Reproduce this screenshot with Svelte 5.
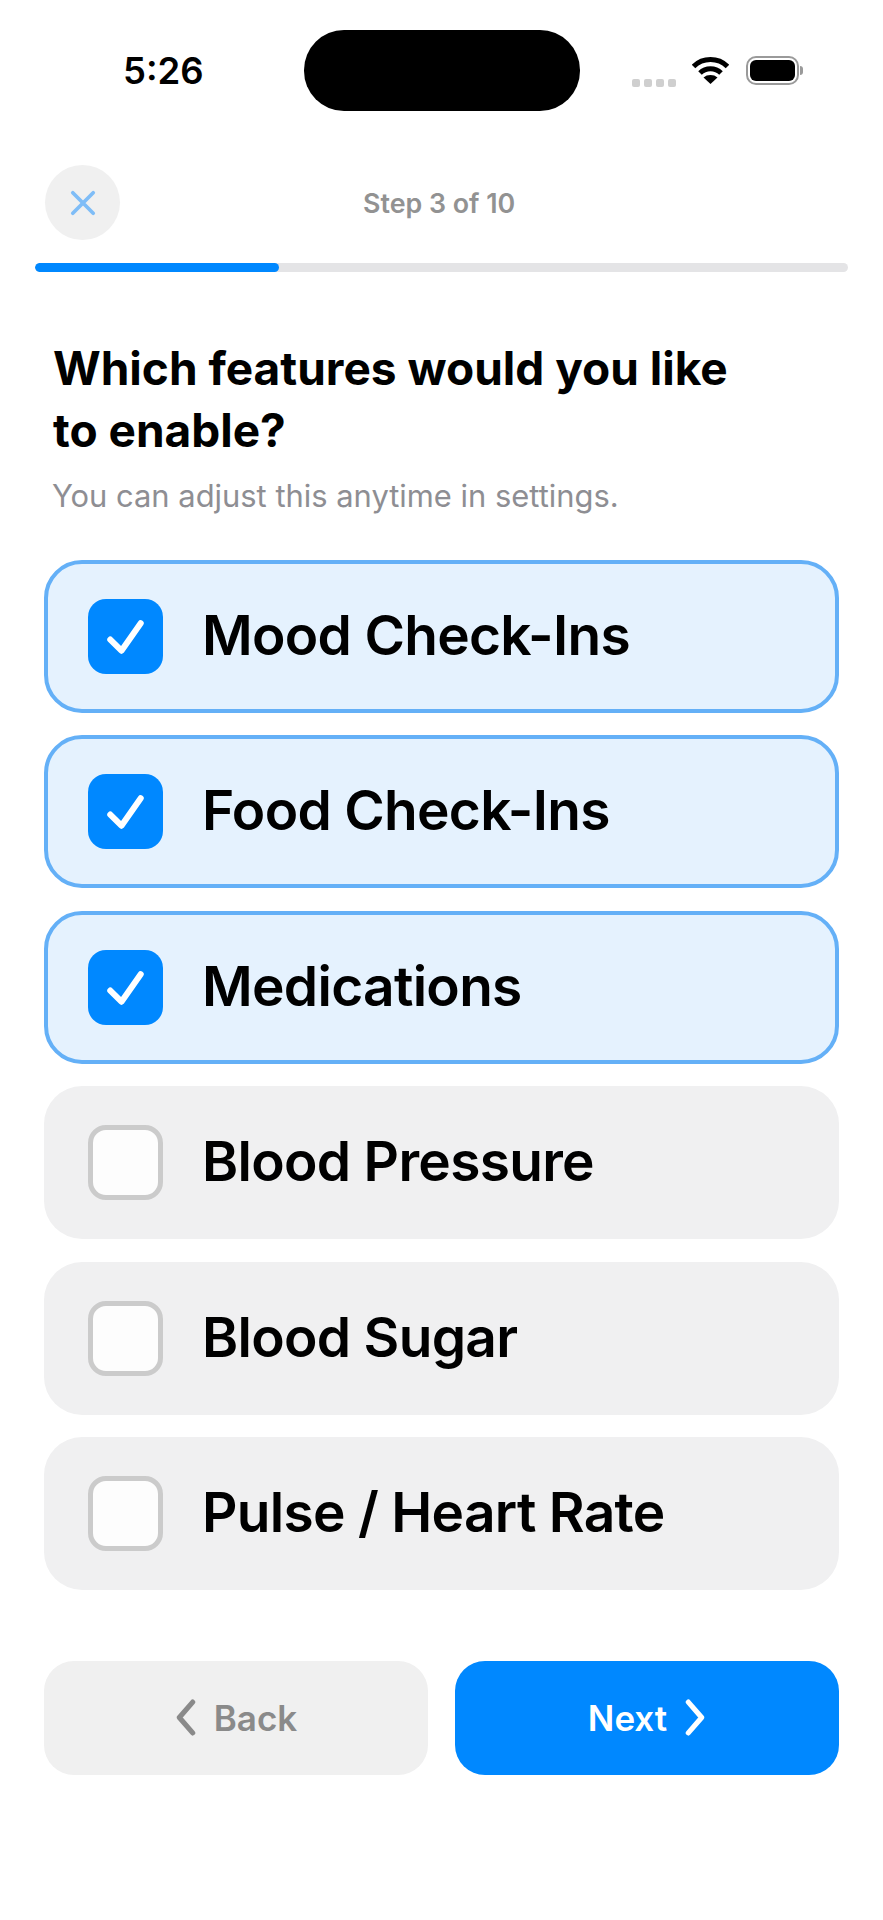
<script>
  const options = [
    { label: "Mood Check-Ins", on: true },
    { label: "Food Check-Ins", on: true },
    { label: "Medications", on: true },
    { label: "Blood Pressure", on: false },
    { label: "Blood Sugar", on: false },
    { label: "Pulse / Heart Rate", on: false }
  ];
</script>

<div class="screen">
  <div class="status">
    <span class="time">5:26</span>
    <div class="island"></div>
    <div class="status-right">
      <div class="dots"><i></i><i></i><i></i><i></i></div>
      <svg class="wifi" viewBox="0 0 37 27" aria-hidden="true">
        <path d="M1.5 9.5C6 5 12 2.5 18.5 2.5S31 5 35.500 9.500" fill="none" stroke="#000" stroke-width="5"/>
        <path d="M8 16c2.800-2.800 6.500-4.300 10.500-4.300S26.200 13.200 29 16" fill="none" stroke="#000" stroke-width="5"/>
        <path d="M11.500 20.500c2-1.700 4.400-2.500 7-2.500s5 .8 7 2.500l-7 6.500z"/>
      </svg>
      <div class="battery">
        <div class="cell"><div class="charge"></div></div>
        <div class="nub"></div>
      </div>
    </div>
  </div>

  <div class="top">
    <button class="close" type="button" aria-label="Close">
      <svg viewBox="0 0 28 28" aria-hidden="true"><path d="M3 3 25 25M25 3 3 25"/></svg>
    </button>
    <span class="step">Step 3 of 10</span>
  </div>
  <div class="progress"><div class="fill"></div></div>

  <h1>Which features would you like<br />to enable?</h1>
  <p class="sub">You can adjust this anytime in settings.</p>

  <div class="list">
    {#each options as opt}
      <div class="row" class:on={opt.on}>
        <div class="box">
          {#if opt.on}
            <svg viewBox="0 0 74 74" aria-hidden="true"><path d="M22 40 33 51 52 24"/></svg>
          {/if}
        </div>
        <span class="label">{opt.label}</span>
      </div>
    {/each}
  </div>

  <div class="actions">
    <button class="btn back" type="button">
      <svg viewBox="0 0 20 36" aria-hidden="true"><path d="M17 3 4 18 17 33"/></svg>
      Back
    </button>
    <button class="btn next" type="button">
      Next
      <svg viewBox="0 0 20 36" aria-hidden="true"><path d="M3 3 16 18 3 33"/></svg>
    </button>
  </div>
</div>

<style>
  :global(body) {
    background: #fff;
    font-family: Inter, "Liberation Sans", sans-serif;
  }

  .screen {
    width: 883px;
    height: 1920px;
    overflow: hidden;
    box-sizing: border-box;
    padding-top: 30px;
    color: #000;
  }

  .status {
    display: flex;
    align-items: center;
    height: 81px;
  }
  .time {
    width: 304px;
    padding-left: 123px;
    box-sizing: border-box;
    font-size: 36.500px;
    font-weight: 600;
  }
  .island {
    width: 276px;
    height: 81px;
    border-radius: 40px;
    background: #000;
  }
  .status-right {
    display: flex;
    align-items: center;
    margin-left: 52px;
  }
  .dots {
    display: flex;
    gap: 4px;
    margin-top: 25px;
  }
  .dots i {
    width: 8px;
    height: 8px;
    border-radius: 2px;
    background: #cfcfcf;
  }
  .wifi {
    width: 37px;
    height: 29px;
    margin-left: 16px;
  }
  .battery {
    display: flex;
    align-items: center;
    margin-left: 17px;
  }
  .cell {
    width: 53px;
    height: 29px;
    box-sizing: border-box;
    padding: 2px;
    border: 2px solid #9a9a9a;
    border-radius: 10px;
  }
  .charge {
    height: 100%;
    border-radius: 6px;
    background: #000;
  }
  .nub {
    width: 3px;
    height: 9px;
    border-radius: 0 3px 3px 0;
    background: #9a9a9a;
    margin-left: 1px;
  }

  .top {
    display: flex;
    align-items: center;
    margin: 54px 0 0 45px;
    height: 75px;
  }
  .close {
    width: 75px;
    height: 75px;
    border: none;
    border-radius: 50%;
    background: #f0f0f0;
    display: flex;
    align-items: center;
    justify-content: center;
    padding: 0;
  }
  .close svg {
    width: 26px;
    height: 26px;
    fill: none;
    stroke: #7fbdf7;
    stroke-width: 4;
    stroke-linecap: round;
  }
  .step {
    margin-left: 243px;
    font-size: 26.800px;
    font-weight: 600;
    color: #929292;
  }

  .progress {
    margin: 23px 35px 0 35px;
    height: 9px;
    border-radius: 5px;
    background: #e4e4e6;
    overflow: hidden;
  }
  .fill {
    width: 244px;
    height: 100%;
    border-radius: 5px;
    background: #0088ff;
  }

  h1 {
    margin: 65px 0 0 53px;
    font-size: 46px;
    line-height: 62px;
    font-weight: 700;
  }
  .sub {
    margin: 17px 0 0 52px;
    font-size: 30.900px;
    line-height: 36px;
    color: #8e8e93;
  }

  .list {
    display: flex;
    flex-direction: column;
    gap: 22.400px;
    margin: 46px 44px 0;
  }
  .row {
    height: 153px;
    box-sizing: border-box;
    display: flex;
    align-items: center;
    padding-left: 44px;
    border-radius: 38px;
    background: #f0f0f1;
  }
  .row.on {
    background: #e5f2fe;
    border: 4px solid #64b0f7;
    padding-left: 40px;
  }
  .box {
    width: 75px;
    height: 75px;
    box-sizing: border-box;
    flex: none;
    border-radius: 18px;
    background: #fdfdfd;
    border: 5px solid #cbcbcb;
  }
  .on .box {
    background: #0088ff;
    border: none;
  }
  .box svg {
    display: block;
    width: 75px;
    height: 75px;
    fill: none;
    stroke: #fff;
    stroke-width: 6;
    stroke-linecap: round;
    stroke-linejoin: round;
  }
  .label {
    margin: 0 0 3px 39px;
    font-size: 55px;
    font-weight: 600;
    letter-spacing: -0.700px;
  }

  .actions {
    display: flex;
    gap: 27px;
    margin: 71px 44px 0;
  }
  .btn {
    flex: 1;
    height: 114px;
    border: none;
    border-radius: 30px;
    display: flex;
    align-items: center;
    justify-content: center;
    gap: 18px;
    font-family: inherit;
    font-size: 35px;
    font-weight: 600;
  }
  .btn svg {
    width: 21px;
    height: 37px;
    fill: none;
    stroke: currentColor;
    stroke-width: 5;
    stroke-linecap: round;
    stroke-linejoin: round;
  }
  .back {
    background: #f0f0f0;
    color: #8a8a8a;
  }
  .next {
    background: #0088ff;
    color: #fff;
  }
</style>
